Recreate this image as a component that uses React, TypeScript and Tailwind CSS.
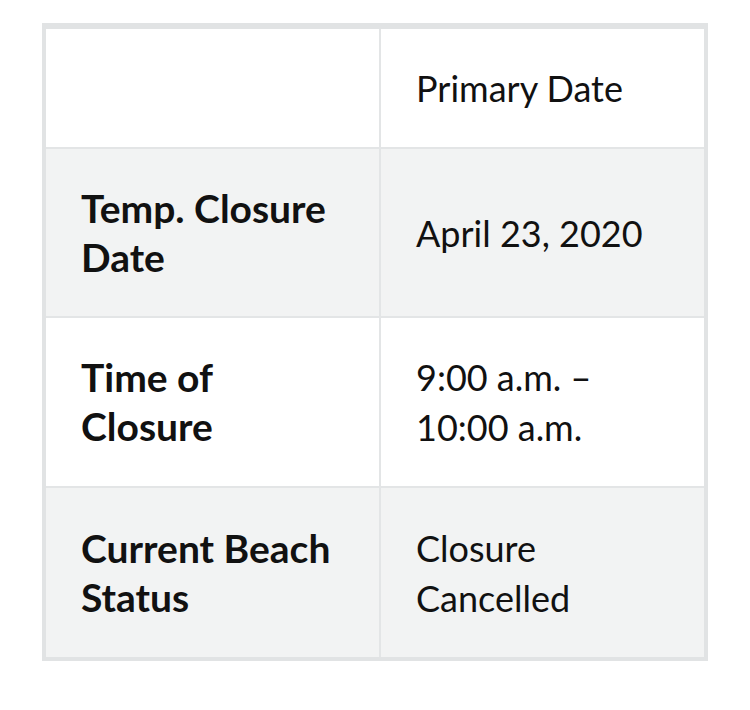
import React from 'react';

const rows = [
    { label: 'Temp. Closure\nDate', value: 'April 23, 2020', h: 'h-[169px]' },
    { label: 'Time of\nClosure', value: '9:00 a.m. –\n10:00 a.m.', h: 'h-[170px]' },
    { label: 'Current Beach\nStatus', value: 'Closure\nCancelled', h: 'h-[171px]' },
];

export default function App() {
    return (
        <div className="min-h-[710px] bg-white pt-[23px] pl-[42px]" style={{ fontFamily: 'Lato, "Noto Sans", sans-serif' }}>
            <div className="w-[666px] border-x-4 border-b-4 border-t-[6px] border-[#e1e3e4] text-[#111] text-[36px] leading-[50px]">
                {/* header */}
                <div className="flex h-[118px] bg-white">
                    <div className="w-[335px] border-r-2 border-[#e3e5e6]" />
                    <div className="flex-1 flex items-center pl-[35px]">Primary Date</div>
                </div>

                {rows.map((row, i) => (
                    <div
                        key={row.label}
                        className={`flex border-t-2 border-[#e3e5e6] ${row.h} ${i % 2 === 0 ? 'bg-[#f2f3f3]' : 'bg-white'}`}
                    >
                        <div className="w-[335px] border-r-2 border-[#e3e5e6] flex items-center pl-[35px] pr-4 font-bold text-[39px] leading-[49px] whitespace-pre-line">
                            {row.label}
                        </div>
                        <div className="flex-1 flex items-center pl-[35px] pr-6 whitespace-pre-line">
                            {row.value}
                        </div>
                    </div>
                ))}
            </div>
        </div>
    );
}
